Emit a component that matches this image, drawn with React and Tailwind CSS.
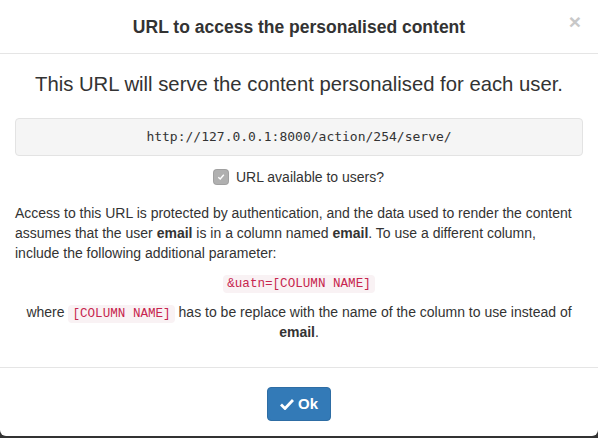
const sans = { fontFamily: '"Liberation Sans", Arial, sans-serif' }

function Code({ children }) {
  return (
    <code className="rounded-[4px] bg-[#f9f2f4] px-[4px] py-[2px] font-['Liberation_Mono',monospace] text-[12.6px] leading-none text-[#c7254e]">
      {children}
    </code>
  )
}

export default function App() {
  return (
    <div className="h-[438px] w-[598px] bg-[#333]" style={sans}>
      <div className="h-[436px] rounded-b-[6px] bg-white text-[#333]">
        {/* header */}
        <div className="relative flex h-[54px] items-center justify-center border-b border-[#e5e5e5]">
          <h4 className="text-[17.5px] font-bold leading-[26px]">URL to access the personalised content</h4>
          <span className="absolute right-[17px] top-[11px] text-[21px] font-bold leading-none text-[#c8c8c8]">×</span>
        </div>

        {/* body */}
        <div className="px-[15px] pt-[15px] pb-[15px] text-[14px] leading-[20px]">
          <h3 className="whitespace-nowrap text-center text-[20.3px] font-light leading-[30px]">
            This URL will serve the content personalised for each user.
          </h3>
          <div className="mt-[19px] flex h-[38px] items-center justify-center rounded-[4px] border border-[#e3e3e3] bg-[#f5f5f5] font-['DejaVu_Sans_Mono',monospace] text-[13px]">
            http://127.0.0.1:8000/action/254/serve/
          </div>
          <div className="mt-[11px] flex h-[20px] items-center justify-center gap-[8px] text-[14px]">
            <span className="flex h-[14px] w-[14px] items-center justify-center rounded-[3px] bg-[#b0b0b0] shadow-[0_0_0_1px_#a0a0a0]">
              <svg width="8" height="8" viewBox="0 0 8 8">
                <path d="M1.3 4.2 L3.2 6 L6.8 1.8" fill="none" stroke="#fff" strokeWidth="1.4" />
              </svg>
            </span>
            <span>URL available to users?</span>
          </div>
          <p className="mt-[16px]">
            Access to this URL is protected by authentication, and the data used to render the content
            assumes that the user <b>email</b> is in a column named <b>email</b>. To use a different column,
            include the following additional parameter:
          </p>
          <p className="mt-[9px] text-center">
            <Code>&amp;uatn=[COLUMN NAME]</Code>
          </p>
          <p className="mt-[10px] text-center">
            where <Code>[COLUMN NAME]</Code> has to be replace with the name of the column to use instead of{' '}
            <b>email</b>.
          </p>
          <div className="h-[10px]" />
        </div>

        {/* footer */}
        <div className="flex justify-center border-t border-[#e5e5e5] pt-[19px]">
          <button className="flex h-[34px] items-center gap-[4px] rounded-[4px] border border-[#2e6da4] bg-[#337ab7] px-[12px] text-[15px] font-bold text-white">
            <svg width="14" height="12" viewBox="0 0 14 12">
              <path d="M1 6.5 L5 10.5 L13 2" fill="none" stroke="#fff" strokeWidth="2.8" />
            </svg>
            Ok
          </button>
        </div>
      </div>
    </div>
  )
}
